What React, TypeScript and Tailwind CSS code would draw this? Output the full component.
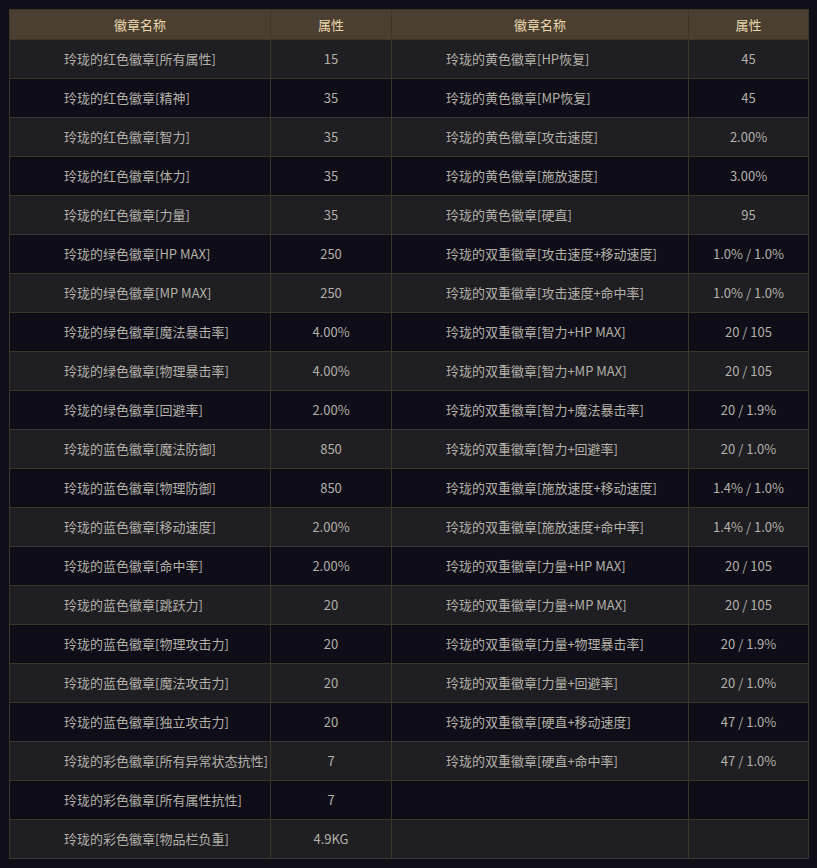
import React from 'react';

type Row = [string, string, string, string];

const rows: Row[] = [
  ['玲珑的红色徽章[所有属性]', '15', '玲珑的黄色徽章[HP恢复]', '45'],
  ['玲珑的红色徽章[精神]', '35', '玲珑的黄色徽章[MP恢复]', '45'],
  ['玲珑的红色徽章[智力]', '35', '玲珑的黄色徽章[攻击速度]', '2.00%'],
  ['玲珑的红色徽章[体力]', '35', '玲珑的黄色徽章[施放速度]', '3.00%'],
  ['玲珑的红色徽章[力量]', '35', '玲珑的黄色徽章[硬直]', '95'],
  ['玲珑的绿色徽章[HP MAX]', '250', '玲珑的双重徽章[攻击速度+移动速度]', '1.0% / 1.0%'],
  ['玲珑的绿色徽章[MP MAX]', '250', '玲珑的双重徽章[攻击速度+命中率]', '1.0% / 1.0%'],
  ['玲珑的绿色徽章[魔法暴击率]', '4.00%', '玲珑的双重徽章[智力+HP MAX]', '20 / 105'],
  ['玲珑的绿色徽章[物理暴击率]', '4.00%', '玲珑的双重徽章[智力+MP MAX]', '20 / 105'],
  ['玲珑的绿色徽章[回避率]', '2.00%', '玲珑的双重徽章[智力+魔法暴击率]', '20 / 1.9%'],
  ['玲珑的蓝色徽章[魔法防御]', '850', '玲珑的双重徽章[智力+回避率]', '20 / 1.0%'],
  ['玲珑的蓝色徽章[物理防御]', '850', '玲珑的双重徽章[施放速度+移动速度]', '1.4% / 1.0%'],
  ['玲珑的蓝色徽章[移动速度]', '2.00%', '玲珑的双重徽章[施放速度+命中率]', '1.4% / 1.0%'],
  ['玲珑的蓝色徽章[命中率]', '2.00%', '玲珑的双重徽章[力量+HP MAX]', '20 / 105'],
  ['玲珑的蓝色徽章[跳跃力]', '20', '玲珑的双重徽章[力量+MP MAX]', '20 / 105'],
  ['玲珑的蓝色徽章[物理攻击力]', '20', '玲珑的双重徽章[力量+物理暴击率]', '20 / 1.9%'],
  ['玲珑的蓝色徽章[魔法攻击力]', '20', '玲珑的双重徽章[力量+回避率]', '20 / 1.0%'],
  ['玲珑的蓝色徽章[独立攻击力]', '20', '玲珑的双重徽章[硬直+移动速度]', '47 / 1.0%'],
  ['玲珑的彩色徽章[所有异常状态抗性]', '7', '玲珑的双重徽章[硬直+命中率]', '47 / 1.0%'],
  ['玲珑的彩色徽章[所有属性抗性]', '7', '', ''],
  ['玲珑的彩色徽章[物品栏负重]', '4.9KG', '', ''],
];

const App: React.FC = () => {
  return (
    <div
      className="min-h-[868px] w-full bg-[#0f0e19] pt-[9px] pl-[9px]"
      style={{ fontFamily: '"Microsoft YaHei", "Noto Sans CJK SC", "Noto Sans", sans-serif' }}
    >
      <table className="w-[799px] table-fixed border-collapse text-[13px]">
        <colgroup>
          <col className="w-[261px]" />
          <col className="w-[121px]" />
          <col className="w-[297px]" />
          <col className="w-[120px]" />
        </colgroup>
        <thead>
          <tr className="h-[30px] bg-[#4a3f31] text-[#ead7ab]">
            <th className="border border-[#3b3628] font-normal">徽章名称</th>
            <th className="border border-[#3b3628] font-normal">属性</th>
            <th className="border border-[#3b3628] font-normal">徽章名称</th>
            <th className="border border-[#3b3628] font-normal">属性</th>
          </tr>
        </thead>
        <tbody className="text-[#b3b0a8]">
          {rows.map((row, i) => (
            <tr key={i} className={`h-[39px] ${i % 2 === 0 ? 'bg-[#1f1e23]' : 'bg-[#0f0e18]'}`}>
              <td className="border border-[#3b3628] pl-[54px] text-left">{row[0]}</td>
              <td className="border border-[#3b3628] text-center">{row[1]}</td>
              <td className="border border-[#3b3628] pl-[54px] text-left">{row[2]}</td>
              <td className="border border-[#3b3628] text-center">{row[3]}</td>
            </tr>
          ))}
        </tbody>
      </table>
    </div>
  );
};

export default App;
